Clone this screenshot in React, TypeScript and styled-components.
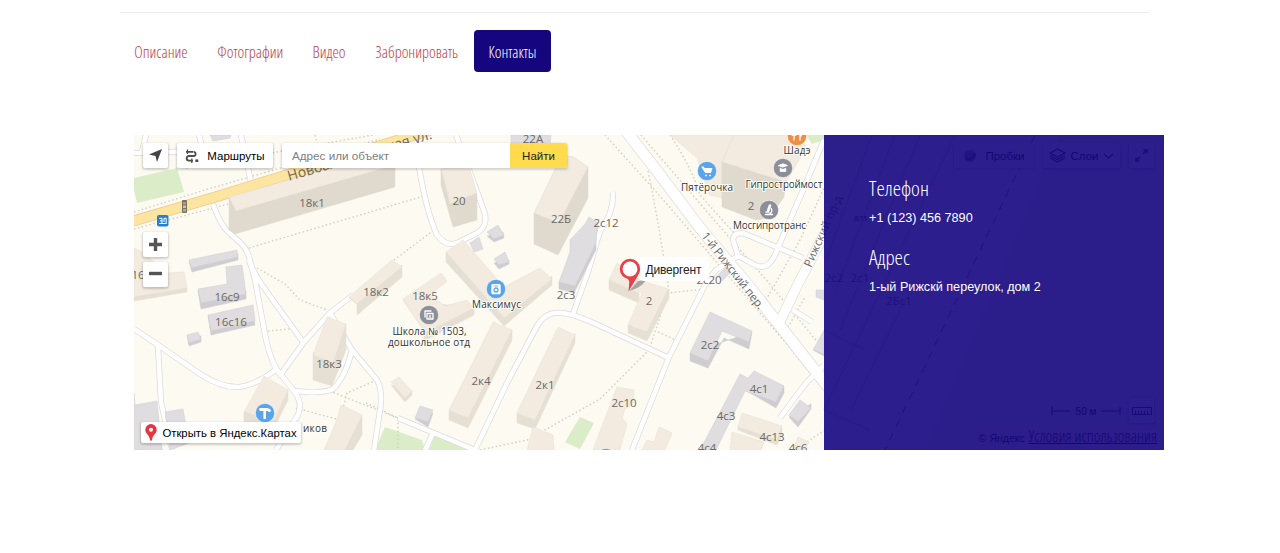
import React from "react";
import styled, { createGlobalStyle } from "styled-components";

const GlobalStyle = createGlobalStyle`
  * { box-sizing: border-box; }
  body { margin: 0; background: #fff; font-family: "Liberation Sans", Arial, sans-serif; overflow: hidden; }
`;

const Page = styled.main`
  width: 1280px;
  height: 553px;
  padding: 12px 116px 0 120px;
  background: #fff;
`;
const Divider = styled.hr`
  width: 1030px;
  height: 1px;
  margin: 0;
  border: 0;
  background: #eee;
`;
const Tabs = styled.nav`
  display: flex;
  gap: 0.75px;
  margin-top: 17px;
`;
const Tab = styled.a<{ $width: number; $active?: boolean }>`
  display: flex;
  justify-content: center;
  align-items: center;
  width: ${(p) => p.$width}px;
  height: 42px;
  padding-top: 1px;
  border-radius: 4px;
  font: 350 16px "Open Sans", sans-serif;
  font-stretch: 75%;
  white-space: nowrap;
  color: ${(p) => (p.$active ? "#fff" : "#b9434b")};
  background: ${(p) => (p.$active ? "#150680" : "transparent")};
`;
const MapFrame = styled.section`
  position: relative;
  display: grid;
  grid-template-columns: 690px 340px;
  width: 1030px;
  height: 315px;
  margin: 63px 0 0 14px;
  overflow: hidden;
  background: #fdfaf2;
`;
const MapDrawing = styled.svg`
  position: absolute;
  inset: 0;
  display: block;
  text { font-family: "Open Sans", "Noto Sans", sans-serif; }
`;
const Controls = styled.div`
  position: absolute;
  inset: 0;
  display: flex;
  flex-direction: column;
  justify-content: space-between;
  padding: 8px 10px 7px 7px;
`;
const ControlRow = styled.div`
  display: flex;
  align-items: flex-start;
  padding-left: 2px;
`;
const Button = styled.button<{ $width?: number }>`
  display: flex;
  align-items: center;
  justify-content: center;
  gap: 8px;
  width: ${(p) => p.$width ?? 25}px;
  height: 25px;
  padding: 0;
  border: 0;
  border-radius: 2px;
  background: #fff;
  box-shadow: 0 1px 2px 1px rgba(0, 0, 0, 0.15), 0 2px 5px -3px rgba(0, 0, 0, 0.15);
  font: 11.5px "Liberation Sans", Arial, sans-serif;
  color: #000;
  white-space: nowrap;
`;
const RoutesButton = styled(Button)`
  margin-left: 9px;
`;
const LayersButton = styled(Button)`
  gap: 5px;
`;
const Search = styled.div`
  display: flex;
  width: 285px;
  height: 25px;
  margin-left: 9px;
  border-radius: 2px;
  overflow: hidden;
  box-shadow: 0 1px 2px 1px rgba(0, 0, 0, 0.15);
  font-size: 11.7px;
  line-height: 26px;
`;
const SearchField = styled.div`
  flex: 1;
  padding-left: 10px;
  background: #fff;
  color: #808080;
`;
const SearchButton = styled.div`
  width: 57px;
  text-align: center;
  background: #ffdb4d;
  color: #222;
  font-size: 11.5px;
`;
const ZoomStack = styled.div`
  display: flex;
  flex-direction: column;
  gap: 5px;
  margin: 0 0 auto 2px;
  padding-top: 64px;
`;
const RightTools = styled.div`
  display: flex;
  gap: 9px;
  margin-left: auto;
`;
const BottomRow = styled.div`
  display: flex;
  align-items: flex-end;
  justify-content: space-between;
`;
const OpenMaps = styled(Button)`
  height: 21px;
  gap: 5px;
  font-size: 11.35px;
`;
const Legal = styled.div`
  display: flex;
  flex-direction: column;
  align-items: flex-end;
  margin: 0 -3px -5px 0;
`;
const ScaleRow = styled.div`
  display: flex;
  align-items: center;
  gap: 8px;
  margin-right: 3px;
`;
const Terms = styled.div`
  display: flex;
  align-items: baseline;
  gap: 4px;
  margin-top: 3px;
  padding-left: 3px;
  background: rgba(255, 255, 255, 0.4);
  font-size: 10.5px;
  line-height: 20px;
  color: #000;
`;
const TermsLink = styled.span`
  font: 300 16.2px/20px "Open Sans", sans-serif;
  font-stretch: 75%;
  text-decoration: underline;
`;
const Panel = styled.aside`
  position: relative;
  grid-column: 2;
  padding: 39px 0 0 45px;
  background: rgba(21, 6, 128, 0.9);
  color: #fff;
`;
const PanelTitle = styled.h2`
  margin: 0;
  font: 320 21px/28px "Open Sans", sans-serif;
  font-stretch: 75%;
`;
const PanelText = styled.p`
  margin: 8px 0 17px;
  font-size: 12.65px;
  line-height: 16px;
  white-space: nowrap;
`;

type Tone = "beige" | "grey" | "tall";
const tones = {
  beige: { top: "#f3ebe0", side: "#e6dfd3" },
  tall: { top: "#f3ebe0", side: "#dfdacd" },
  grey: { top: "#dfdddf", side: "#cfcdd0" },
};
const Building = ({ top, side, tone = "beige" }: { top: string; side?: string; tone?: Tone }) => (
  <g stroke={tones[tone].side} strokeWidth=".5" strokeLinejoin="round">
    {side && <path d={side} fill={tones[tone].side} />}
    <path d={top} fill={tones[tone].top} />
  </g>
);

const buildings: { top: string; side?: string; tone?: Tone }[] = [
  { tone: "tall", side: "M229 197L236 211L395 165V187L235 234L229 230Z", top: "M229 197L380 154L395 165L236 211Z" },
  { tone: "tall", side: "M441 169L450 204L477 193V220L453 227L441 185Z", top: "M441 169L468 163L477 193L451 203Z" },
  { tone: "tall", side: "M534 213L559 223L588 167V198L558 255L534 244Z", top: "M534 213L562 155L574 157L588 167L559 223Z" },
  { tone: "grey", top: "M511 135H551L550 144H511Z" },
  { tone: "grey", top: "M210 135H231L230 138L213 141Z" },
  { side: "M446 252V262L504 326L552 285V276L505 318Z", top: "M446 252L463 240L504 287L540 268L552 279L504 318Z" },
  { side: "M349 298L357 304V315L402 277V265Z", top: "M349 297L392 260L402 267L357 304Z" },
  { side: "M403 300L424 330V341L474 315V308Z", top: "M403 299L441 273L447 281L430 295L445 306L467 300L474 308L425 333Z" },
  { side: "M449 410V420L468 428L512 340V330L468 418Z", top: "M493 322L512 330L468 418L449 410Z" },
  { side: "M517 413V423L535 429L575 343V333L535 420Z", top: "M558 327L575 335L535 420L517 413Z" },
  { side: "M391 385L405 402L412 395V391Z", top: "M399 377L412 391L405 398L391 382Z" },
  { tone: "grey", side: "M415 419L428 427L433 413Z", top: "M420 406L433 410L428 422L415 418Z" },
  { top: "M533 427L553 435L554 450H527Z" },
  { side: "M134 301L187 292V286L134 295Z", top: "M134 248L142 252L168 273L184 272L187 288L134 297Z" },
  { tone: "grey", side: "M189 262L192 272L238 260V254Z", top: "M189 260L237 250L238 257L191 268Z" },
  { tone: "grey", side: "M198 291L201 309L246 299V291Z", top: "M226 267L242 265L246 294L201 303L198 289L227 284Z" },
  { tone: "grey", side: "M208 316L211 335L255 325L253 312Z", top: "M208 315L253 305L255 321L211 331Z" },
  { tone: "grey", side: "M187 335L189 346L201 342V336Z", top: "M187 335L198 332L201 339L189 343Z" },
  { side: "M313 353V380L332 386L346 350V324Z", top: "M327 317L346 324L333 363L313 355Z" },
  { side: "M244 412V424L273 430L288 400V390Z", top: "M264 376L288 390L274 421L244 412Z" },
  { tone: "grey", side: "M134 438L158 432L162 450H134Z", top: "M134 393L135 405L157 401L162 450H134Z" },
  { tone: "grey", top: "M165 412L183 409L189 443L170 450Z" },
  { side: "M362 415V435L353 450H343Z", top: "M341 405L362 415L345 450H324L336 422Z" },
  { side: "M609 280V290L639 303V293ZM628 325V333L647 341L669 298V289Z", top: "M617 263L640 280L668 289L647 332L628 325L642 293L609 280Z" },
  { tone: "grey", side: "M690 353V361L708 368L724 338L749 349L752 332Z", top: "M710 312L752 331L749 342L722 331L708 361L690 353Z" },
  { tone: "grey", side: "M745 390L776 408L784 393V386Z", top: "M740 374L748 378L754 371L784 386L776 402L745 391L716 450H700Z" },
  { side: "M738 425V430L777 445L782 436V428Z", top: "M742 413L782 426L777 440L738 427Z" },
  { top: "M732 432L764 442L761 450H730Z" },
  { tone: "grey", side: "M789 417L798 427L811 409V404Z", top: "M800 400L811 408L798 422L789 415Z" },
  { top: "M798 437L809 442L805 450H793Z" },
  { top: "M617 387L634 390L633 404L625 409L622 418L627 424L620 450H593Z" },
  { top: "M659 427L672 433L665 450H642L647 440L654 442Z" },
  { top: "M670 135H734L722 162V198L709 195L697 158Z" },
  { tone: "tall", side: "M722 162L786 182L784 197L769 218L756 220L722 207Z", top: "M734 135H800L806 148L786 182L722 162Z" },
  { tone: "grey", side: "M559 282V289L574 293L596 250V242Z", top: "M589 217L598 223L596 243L575 286L559 282L570 252V240L585 224Z" },
  { tone: "grey", side: "M487 236L494 242L504 238L503 232Z", top: "M487 232L498 225L504 235L494 239Z" },
  { tone: "grey", top: "M470 243L479 237L483 249L474 252Z" },
  { tone: "grey", side: "M494 263L499 269L509 264V260Z", top: "M494 259L505 252L509 262L499 265Z" },
  { tone: "grey", top: "M816 290H824V300L816 297Z" },
  { tone: "grey", side: "M813 350L824 356V344Z", top: "M824 330L813 350L824 354Z" },
  { tone: "grey", top: "M718 275L727 266L731 272L722 281Z" },
];

const roads = [
  "M213 204C220 223 224 229 235 238Q246 246 249 257L255 280L264 329Q269 360 281 376",
  "M249 260Q253 273 267 292L303 342",
  "M134 329L158 345L200 374Q221 388 240 387Q258 384 275 370",
  "M158 346L161 402L172 450",
  "M281 374L304 342L330 313L353 295",
  "M274 366L294 391Q303 402 298 415L276 450",
  "M330 313L352 350Q345 378 333 389Q323 394 294 391",
  "M352 350L377 380Q384 392 379 417L374 450",
  "M398 418L475 450M433 433L425 450",
  "M475 450L508 381L536 328Q545 311 562 313Q574 314 598 325L669 358",
  "M632 450L669 357L705 285L716 270L738 256L733 240Q733 233 743 233L803 258",
  "M738 256L757 266Q770 270 777 250L803 190L824 140",
  "M418 160Q425 208 437 235Q446 247 457 243L477 233Q489 226 484 211L472 178L456 135",
  "M573 314L588 272L600 231Q614 213 613 192",
  "M793 310L812 322",
  "M824 365L807 382Q795 397 780 418",
  "M199 135L203 151L134 153M251 182L241 135M142 152L146 135",
];

const footpaths = [
  "M134 212L205 190L380 139", "M134 229L285 189", "M249 248L424 196", "M257 268L285 284L300 300L327 310",
  "M394 260L434 230", "M268 331L290 329", "M296 408L340 420L347 393L377 380M398 418L327 390",
  "M366 403L398 418V450", "M480 450L527 440L600 399L649 350L668 293L705 289M658 332L678 341",
  "M605 135L660 196L785 342L824 390", "M641 135L709 214L768 282L824 350",
  "M648 171Q661 235 669 292M670 135Q692 168 700 195L735 234",
  "M766 300L800 240L824 188M782 338L805 297",
  "M825 430L795 450", "M186 168L373 135M315 135L319 150",
];

type LabelProps = { x: number; y: number; children: React.ReactNode; poi?: boolean; width?: number };
const Label = ({ x, y, children, poi, width }: LabelProps) => (
  <text
    x={x}
    y={y}
    textAnchor="middle"
    fontSize={poi ? 10 : 11.5}
    fill={poi ? "#333" : "#6c6863"}
    stroke={poi ? "#fffdf8" : "none"}
    strokeWidth={poi ? 2 : 0}
    paintOrder="stroke"
    strokeLinejoin="round"
    textLength={width}
  >
    {children}
  </text>
);

const houseNumbers: [number, number, string][] = [
  [312, 207, "18к1"], [459, 205, "20"], [533, 143, "22А"], [561, 223, "22Б"], [606, 227, "2с12"],
  [751, 210, "2"], [376, 296, "18к2"], [425, 300, "18к5"], [566, 299, "2с3"], [227, 301, "16с9"],
  [231, 326, "16с16"], [329, 368, "18к3"], [481, 385, "2к4"], [545, 389, "2к1"], [649, 305, "2"],
  [709, 284, "2с20"], [710, 349, "2с2"], [624, 407, "2с10"], [759, 393, "4с1"], [726, 420, "4с3"],
  [772, 441, "4с13"], [707, 452, "4с4"], [798, 452, "4с6"], [138, 279, "16"], [834, 282, "2с2"],
  [860, 282, "2с1"], [899, 305, "2Бс1"],
];

const Poi = ({ x, y, color = "#5aa5ea", children }: { x: number; y: number; color?: string; children: React.ReactNode }) => (
  <g transform={`translate(${x} ${y})`}>
    <circle r="9.6" fill={color} stroke="#fff" strokeOpacity=".6" strokeWidth=".8" />
    <g fill="none" stroke="#fff" strokeWidth="1.3" strokeLinecap="round" strokeLinejoin="round">
      {children}
    </g>
  </g>
);

const CityMap = () => (
  <MapDrawing width="1030" height="315" viewBox="134 135 1030 315">
    <rect x="134" y="135" width="1030" height="315" fill="#fdfaf2" />
    <g fill="#dbecc9">
      <path d="M134 178L177 168L184 192L137 203L134 190Z" />
      <path d="M385 427L422 440L425 450H375Z" />
      <path d="M436 433L470 450H429Z" />
      <path d="M580 417L594 423L580 449L565 442Z" />
      <path d="M806 135H824V140L812 144Z" />
    </g>
    <path d="M870 135H1060L925 450H824V250Z" fill="#ffffff" />
    <path d="M1060 135H1164V450H925Z" fill="#f3efe4" />
    <g fill="none" stroke="#cdcfc0" strokeWidth="1.4" strokeDasharray="1.5 2.5">
      {footpaths.map((d) => <path key={d} d={d} />)}
    </g>
    <g fill="none" stroke="#dcd9db" strokeWidth="6">
      {roads.map((d) => <path key={d} d={d} />)}
      <path d="M626 131L657 171L700 228L747 284L777 322L832 392" strokeWidth="12" />
      <path d="M840 205L797 286L778 326" strokeWidth="10.5" />
    </g>
    <g fill="none" stroke="#fff" strokeWidth="4.6">
      {roads.map((d) => <path key={d} d={d} />)}
      <path d="M626 131L657 171L700 228L747 284L777 322L832 392" strokeWidth="10.8" />
      <path d="M840 205L797 286L778 326" strokeWidth="9.3" />
    </g>
    <path d="M130 222L212 198L290 174L440 127" fill="none" stroke="#efc98c" strokeWidth="11" />
    <path d="M130 222L212 198L290 174L440 127" fill="none" stroke="#fce5a0" strokeWidth="9.5" />
    {buildings.map((b) => <Building key={b.top} {...b} />)}
    <g fill="none" stroke="#e4e2df" strokeWidth="2">
      <path d="M872 135L826 260M895 135L836 290M920 135L840 330M955 135L824 410M905 300L850 412M824 330L865 350M824 410L870 430" />
    </g>
    <path d="M1035 135L885 450" fill="none" stroke="#8b8784" strokeWidth="1.2" strokeDasharray="8 7" />
    {houseNumbers.map(([x, y, t]) => <Label key={t + x} x={x} y={y}>{t}</Label>)}
    <g fill="#6c6863" fontSize="14">
      <text transform="translate(289 181) rotate(-16.5)" textLength="150">Новоалексеевская ул.</text>
      <text transform="translate(701 236) rotate(52)" fontSize="11.5" textLength="94">1-й Рижский пер.</text>
      <text transform="translate(811 268) rotate(-66)" fontSize="11.5" textLength="77">Рижский пр-д</text>
    </g>
    <g transform="translate(182 200)">
      <rect width="5" height="13" rx="1" fill="#777365" />
      <path d="M1 2H4V4.5H1Z" fill="#d08f85" /><path d="M1 5.5H4V8H1Z" fill="#cfc49b" /><path d="M1 9H4V11.5H1Z" fill="#8fc278" />
    </g>
    <g transform="translate(157 215)">
      <rect width="11.5" height="11.5" rx="2" fill="#2581d0" />
      <path d="M2.2 3.3H5V8.5H2.2M5 5.8H3M7 3.3V7M5 8.5H9.5M7 3.3H9.2V8.5" fill="none" stroke="#fff" strokeWidth="1" />
    </g>
    <Poi x={707} y={171}><path d="M-5-4H-3.5L-1.5 1.5H3.5L4.8-2.5H-2.5ZL-1.5 1.5" fill="#fff" strokeWidth="1.1" /><path d="M-1 4.3V4.4M3 4.3V4.4" strokeWidth="1.8" /></Poi>
    <Poi x={496} y={289}><rect x="-4" y="-4.3" width="8" height="8.8" rx=".8" fill="#fff" /><circle cy="1" r="2" stroke="#5aa5ea" /><path d="M-2-3H2" stroke="#5aa5ea" strokeWidth=".8" /></Poi>
    <Poi x={265} y={413}><path d="M-4.5-3.5H2.5L4.5-2.5" strokeWidth="2.8" /><path d="M-.3-2.5V5" strokeWidth="2.6" /></Poi>
    <Poi x={797} y={136} color="#ef8f45"><path d="M-3-5V4M-5-5V-1H-1V-5M3-5V4M2-5Q5-3 4 0" /></Poi>
    <Poi x={606} y={458}>{null}</Poi>
    <Poi x={783} y={168} color="#8c8f98"><path d="M-4.5-2.5L0-4.2L4.5-2.5L0-1ZM-2.8.5V3.5H2.8V.5L0 1.3Z" fill="#fff" strokeWidth=".8" /></Poi>
    <Poi x={769} y={210} color="#8c8f98"><path d="M1-4.5L-.8.5" strokeWidth="2.6" /><path d="M-3.5 4.5H3.5M2.3-1.5Q4 2 .5 4M-3 2H0" /></Poi>
    <Poi x={429} y={315} color="#8c8f98"><path d="M-4 2V-4H2M-2-1.5H4V4H-2Z" /><path d="M0 3L1 0L2 3" strokeWidth=".8" /></Poi>
    <Label poi x={707} y={191} width={52}>Пятёрочка</Label>
    <Label poi x={784} y={187.5} width={77}>Гипростроймост</Label>
    <Label poi x={797} y={154} width={27}>Шадэ</Label>
    <Label poi x={769.5} y={229} width={73}>Мосгипротранс</Label>
    <Label poi x={496.5} y={308} width={49}>Максимус</Label>
    <Label poi x={429.5} y={334.5} width={74}>Школа № 1503,</Label>
    <Label poi x={429} y={346} width={82}>дошкольное отд</Label>
    <Label poi x={315} y={432} width={24}>иков</Label>
    <text x="854" y="221" fontSize="8" fill="#222" textLength="13" lengthAdjust="spacingAndGlyphs">ВЛ5</text>
    <path d="M629 291L638 281L646 280Q641 288 629 291" fill="#777" opacity=".6" />
    <path d="M636 257H704Q709 257 709 262V275Q709 281 703 281H643L636 277Z" fill="#fff" />
    <path d="M625 276.5Q630 280 629.2 283L628.5 291.5L638 275.5Z" fill="#e94149" />
    <circle cx="630" cy="269" r="8.8" fill="#fff" stroke="#e94149" strokeWidth="2.8" />
    <text x="645.5" y="273.5" fontSize="12" fill="#222" textLength="56" style={{ fontFamily: "Liberation Sans" }}>Дивергент</text>
  </MapDrawing>
);

const Arrow = () => <svg width="15" height="15"><path d="M14 1L1 6.5L7.5 8L9 14Z" fill="#444" /></svg>;
const Route = () => (
  <svg width="14" height="14" fill="none" stroke="#4c4c4c" strokeWidth="1.8">
    <path d="M1 2.8H8M4 7H8.5a2 2 0 0 0 0-4.2M4 7a2.3 2.3 0 0 0 0 4.7H8" /><path d="M2.5.5V5M6.8 9.5V14" strokeWidth="1.3" /><path d="M10.3 11.7H13.3" strokeWidth="2.6" />
  </svg>
);
const Sign = ({ plus }: { plus?: boolean }) => (
  <svg width="13" height="13"><path d={plus ? "M0 6.5H13M6.5 0V13" : "M0 5.5H13"} stroke="#555" strokeWidth="3.4" /></svg>
);
const Pin = () => (
  <svg width="12" height="17"><path fillRule="evenodd" d="M6 0a5.7 5.7 0 0 0-5.7 5.7C.3 10 5 11 5 16.5H7C7 11 11.7 10 11.7 5.7A5.7 5.7 0 0 0 6 0Zm0 3.7a2 2 0 1 1 0 4a2 2 0 0 1 0-4Z" fill="#e7343f" /></svg>
);

export default function App() {
  return (
    <>
      <GlobalStyle />
      <Page>
        <Divider />
        <Tabs>
          <Tab $width={82}>Описание</Tab>
          <Tab $width={95}>Фотографии</Tab>
          <Tab $width={61}>Видео</Tab>
          <Tab $width={113}>Забронировать</Tab>
          <Tab $width={77} $active>Контакты</Tab>
        </Tabs>
        <MapFrame>
          <CityMap />
          <Controls>
            <ControlRow>
              <Button><Arrow /></Button>
              <RoutesButton $width={96}><Route />Маршруты</RoutesButton>
              <Search><SearchField>Адрес или объект</SearchField><SearchButton>Найти</SearchButton></Search>
              <RightTools>
                <Button $width={80}><svg width="14" height="14"><circle cx="7" cy="7" r="6" fill="#999" /><path d="M3 9A5 5 0 0 0 11 4" stroke="#555" strokeWidth="2.5" fill="none" /></svg>Пробки</Button>
                <LayersButton $width={77}>
                  <svg width="17" height="15" fill="none" stroke="#333" strokeWidth="1.2"><path d="M1 5L8.5 1L16 5L8.5 9ZM1 7.5L8.5 11.5L16 7.5M1 10L8.5 14L16 10" /></svg>
                  Слои
                  <svg width="11" height="6"><path d="M1 1L5.5 5L10 1" fill="none" stroke="#333" strokeWidth="1.3" /></svg>
                </LayersButton>
                <Button><svg width="13" height="13" fill="none" stroke="#333" strokeWidth="1.5"><path d="M8.5 1H12V4.5M12 1L8 5M4.5 12H1V8.5M1 12L5 8" /></svg></Button>
              </RightTools>
            </ControlRow>
            <ZoomStack><Button><Sign plus /></Button><Button><Sign /></Button></ZoomStack>
            <BottomRow>
              <OpenMaps $width={160}><Pin />Открыть в Яндекс.Картах</OpenMaps>
              <Legal>
                <ScaleRow>
                  <svg width="70" height="12"><path d="M1 1V10M1 6H19M50 6H69V2M69 6V10" stroke="#222" fill="none" /><text x="35" y="10" textAnchor="middle" fontSize="10">50 м</text></svg>
                  <Button><svg width="20" height="8" fill="none" stroke="#333"><path d="M.5.5H19.5V7.5H.5ZM3.5 4V7M6.5 4V7M9.5 4V7M12.5 4V7M15.5 4V7" /></svg></Button>
                </ScaleRow>
                <Terms>© Яндекс <TermsLink>Условия использования</TermsLink></Terms>
              </Legal>
            </BottomRow>
          </Controls>
          <Panel>
            <PanelTitle>Телефон</PanelTitle>
            <PanelText>+1 (123) 456 7890</PanelText>
            <PanelTitle>Адрес</PanelTitle>
            <PanelText>1-ый Рижскй переулок, дом 2</PanelText>
          </Panel>
        </MapFrame>
      </Page>
    </>
  );
}
